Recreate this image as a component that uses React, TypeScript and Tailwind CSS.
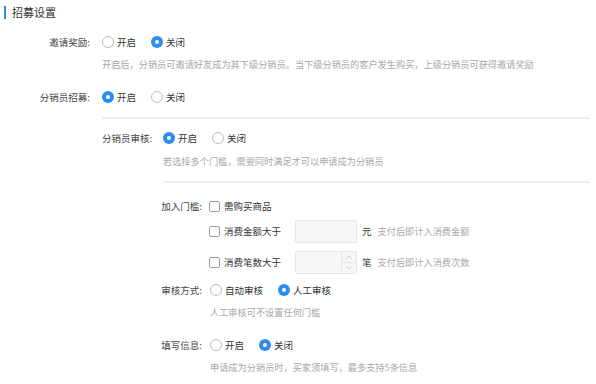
import React from "react";

const FONT = { fontFamily: '"Noto Sans CJK SC", "Noto Sans", sans-serif' };

function Radio({ checked, label, gap = "mr-[15px]" }: { checked: boolean; label: string; gap?: string }) {
  return (
    <div className={`flex items-center ${gap}`}>
      {checked ? (
        <span className="w-[12px] h-[12px] rounded-full bg-[#2d8cf0] flex items-center justify-center">
          <span className="w-[4px] h-[4px] rounded-full bg-white" />
        </span>
      ) : (
        <span className="w-[12px] h-[12px] rounded-full border border-[#b8bcc4] bg-white" />
      )}
      <span className="ml-[3px] text-[#333]">{label}</span>
    </div>
  );
}

function Checkbox({ label }: { label: string }) {
  return (
    <div className="flex items-center">
      <span className="w-[11px] h-[11px] rounded-[2px] border border-[#9a9ea6] bg-white" />
      <span className="ml-[4px] text-[#333]">{label}</span>
    </div>
  );
}

function Hint({ children, cls }: { children: React.ReactNode; cls: string }) {
  return <div className={`h-[14px] leading-[14px] text-[9.2px] text-[#a8a8a8] whitespace-nowrap ${cls}`}>{children}</div>;
}

export default function App() {
  return (
    <div className="w-[596px] h-[384px] bg-white overflow-hidden text-[9.5px] text-[#444]" style={FONT}>
      {/* title */}
      <div className="h-[24px] flex items-center">
        <span className="ml-[4px] w-[2px] h-[13px] bg-[#2d8cf0]" />
        <span className="ml-[6px] text-[11px] text-[#333]">招募设置</span>
      </div>

      {/* 邀请奖励 */}
      <div className="mt-[8px] h-[20px] flex items-center">
        <div className="w-[90px] text-right whitespace-nowrap">邀请奖励:</div>
        <div className="ml-[12px] flex items-center">
          <Radio checked={false} label="开启" />
          <Radio checked={true} label="关闭" />
        </div>
      </div>
      <Hint cls="mt-[5px] ml-[102px]">开启后，分销员可邀请好友成为其下级分销员。当下级分销员的客户发生购买，上级分销员可获得邀请奖励</Hint>

      {/* 分销员招募 */}
      <div className="mt-[16px] h-[20px] flex items-center">
        <div className="w-[90px] text-right whitespace-nowrap">分销员招募:</div>
        <div className="ml-[12px] flex items-center">
          <Radio checked={true} label="开启" />
          <Radio checked={false} label="关闭" />
        </div>
      </div>

      <div className="mt-[10px] ml-[102px] mr-[6px] h-[2px] bg-[#eeeeee]" />

      <div className="ml-[102px]">
        <div className="mt-[9px] h-[20px] flex items-center">
          <div className="w-[61px] whitespace-nowrap">分销员审核:</div>
          <div className="flex items-center">
            <Radio checked={true} label="开启" />
            <Radio checked={false} label="关闭" />
          </div>
        </div>
        <Hint cls="mt-[6px] ml-[61px]">若选择多个门槛，需要同时满足才可以申请成为分销员</Hint>

        <div className="mt-[13px] ml-[61px] mr-[6px] h-[2px] bg-[#eeeeee]" />

        {/* 加入门槛 */}
        <div className="mt-[13px] h-[20px] flex items-center">
          <div className="w-[100px] text-right whitespace-nowrap">加入门槛:</div>
          <div className="ml-[7px]">
            <Checkbox label="需购买商品" />
          </div>
        </div>

        <div className="mt-[4px] h-[23px] flex items-center ml-[107px]">
          <div className="w-[86px]">
            <Checkbox label="消费金额大于" />
          </div>
          <div className="w-[62px] h-[23px] border border-[#e6e6e6] bg-[#f7f7f7] rounded-[2px]" />
          <span className="ml-[5px] text-[#333]">元</span>
          <span className="ml-[6px] text-[9.2px] text-[#a8a8a8]">支付后即计入消费金额</span>
        </div>

        <div className="mt-[8px] h-[23px] flex items-center ml-[107px]">
          <div className="w-[86px]">
            <Checkbox label="消费笔数大于" />
          </div>
          <div className="w-[62px] h-[23px] border border-[#e6e6e6] bg-[#f7f7f7] rounded-[2px] flex">
            <div className="flex-1" />
            <div className="w-[15px] border-l border-[#e6e6e6] flex flex-col">
              <div className="flex-1 flex items-center justify-center border-b border-[#e6e6e6]">
                <svg width="6" height="4" viewBox="0 0 6 4"><path d="M0.5 3.5 L3 1 L5.5 3.5" fill="none" stroke="#bbb" strokeWidth="0.8" /></svg>
              </div>
              <div className="flex-1 flex items-center justify-center">
                <svg width="6" height="4" viewBox="0 0 6 4"><path d="M0.5 0.5 L3 3 L5.5 0.5" fill="none" stroke="#bbb" strokeWidth="0.8" /></svg>
              </div>
            </div>
          </div>
          <span className="ml-[5px] text-[#333]">笔</span>
          <span className="ml-[6px] text-[9.2px] text-[#a8a8a8]">支付后即计入消费次数</span>
        </div>

        {/* 审核方式 */}
        <div className="mt-[6px] h-[20px] flex items-center">
          <div className="w-[100px] text-right whitespace-nowrap">审核方式:</div>
          <div className="ml-[8px] flex items-center">
            <Radio checked={false} label="自动审核" />
            <Radio checked={true} label="人工审核" />
          </div>
        </div>
        <Hint cls="mt-[5px] ml-[108px]">人工审核可不设置任何门槛</Hint>

        {/* 填写信息 */}
        <div className="mt-[16px] h-[20px] flex items-center">
          <div className="w-[100px] text-right whitespace-nowrap">填写信息:</div>
          <div className="ml-[8px] flex items-center">
            <Radio checked={false} label="开启" />
            <Radio checked={true} label="关闭" />
          </div>
        </div>
        <Hint cls="mt-[5px] ml-[108px]">申请成为分销员时，买家须填写，最多支持5条信息</Hint>
      </div>
    </div>
  );
}
